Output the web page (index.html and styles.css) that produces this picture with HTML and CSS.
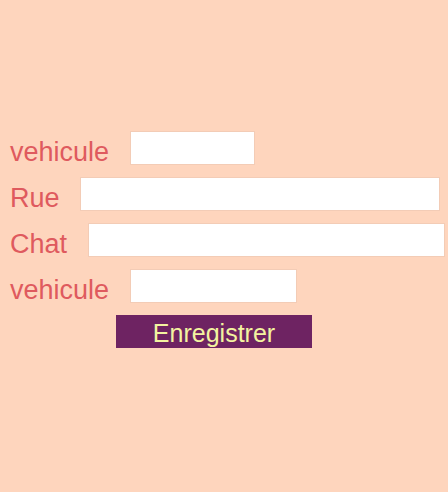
FILE: index.html
```html
<!DOCTYPE html>
<html>
<head>
<meta charset="utf-8">
<link rel="stylesheet" href="styles.css">
</head>
<body>
<form class="form">
  <div class="row"><label class="lbl">vehicule</label><input class="field w1" type="text"></div>
  <div class="row"><label class="lbl">Rue</label><input class="field w2" type="text"></div>
  <div class="row"><label class="lbl">Chat</label><input class="field w3" type="text"></div>
  <div class="row"><label class="lbl">vehicule</label><input class="field w4" type="text"></div>
  <div class="actions"><button class="btn" type="button">Enregistrer</button></div>
</form>
</body>
</html>
```
FILE: styles.css
```css
html, body {
  margin: 0;
  padding: 0;
  background: #fed5bd;
  height: 100%;
}
.form {
  display: flex;
  flex-direction: column;
  gap: 12px;
  padding: 131px 0 0 10px;
  font-family: "Liberation Sans", Arial, sans-serif;
}
.row {
  display: flex;
  align-items: center;
  height: 34px;
}
.lbl {
  color: #df5a5e;
  font-size: 27px;
  margin-right: 20.5px;
  padding-top: 8px;
}
.field {
  box-sizing: border-box;
  height: 34px;
  border: 1px solid #f3ccb6;
  background: #fff;
  margin: 0;
  padding: 0;
}
.w1 { width: 125px; }
.w2 { width: 360px; }
.w3 { width: 357px; }
.w4 { width: 167px; }
.actions {
  display: flex;
  padding-left: 106px;
}
.btn {
  box-sizing: border-box;
  width: 196px;
  height: 33px;
  background: #6e2362;
  color: #f3f3a0;
  border: none;
  padding: 4px 0 0 0;
  font-family: "Liberation Sans", Arial, sans-serif;
  font-size: 25px;
  line-height: 29px;
}
```
